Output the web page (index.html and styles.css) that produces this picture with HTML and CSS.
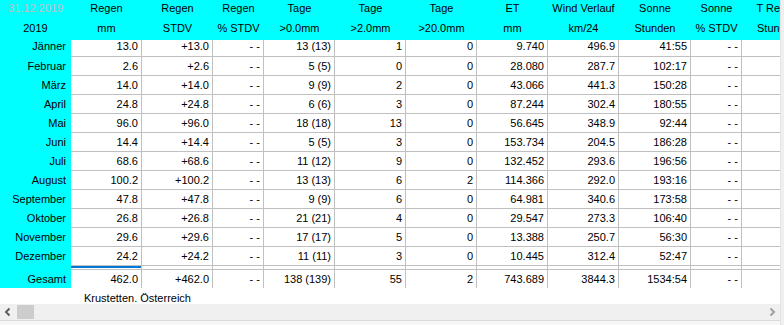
FILE: index.html
```html
<!DOCTYPE html>
<html>
<head>
<meta charset="utf-8">
<link rel="stylesheet" href="styles.css">
</head>
<body>
<div class="window">
  <div class="main">
    <div class="grid">
      <div class="row head h1">
        <div class="hc date">31.12.2019</div>
        <div class="hc">Regen</div><div class="hc">Regen</div><div class="hc">Regen</div><div class="hc">Tage</div><div class="hc">Tage</div><div class="hc">Tage</div><div class="hc">ET</div><div class="hc">Wind Verlauf</div><div class="hc">Sonne</div><div class="hc">Sonne</div><div class="hc">T Regen</div>
      </div>
      <div class="row head h2">
        <div class="hc">2019</div>
        <div class="hc">mm</div><div class="hc">STDV</div><div class="hc">% STDV</div><div class="hc">&gt;0.0mm</div><div class="hc">&gt;2.0mm</div><div class="hc">&gt;20.0mm</div><div class="hc">mm</div><div class="hc">km/24</div><div class="hc">Stunden</div><div class="hc">% STDV</div><div class="hc">Stunden</div>
      </div>
      <div class="row first">
        <div class="lab">Jänner</div><div class="c">13.0</div><div class="c">+13.0</div><div class="c">- -</div><div class="c">13 (13)</div><div class="c">1</div><div class="c">0</div><div class="c">9.740</div><div class="c">496.9</div><div class="c">41:55</div><div class="c">- -</div><div class="c"></div>
      </div>
      <div class="row">
        <div class="lab">Februar</div><div class="c">2.6</div><div class="c">+2.6</div><div class="c">- -</div><div class="c">5 (5)</div><div class="c">0</div><div class="c">0</div><div class="c">28.080</div><div class="c">287.7</div><div class="c">102:17</div><div class="c">- -</div><div class="c"></div>
      </div>
      <div class="row">
        <div class="lab">März</div><div class="c">14.0</div><div class="c">+14.0</div><div class="c">- -</div><div class="c">9 (9)</div><div class="c">2</div><div class="c">0</div><div class="c">43.066</div><div class="c">441.3</div><div class="c">150:28</div><div class="c">- -</div><div class="c"></div>
      </div>
      <div class="row">
        <div class="lab">April</div><div class="c">24.8</div><div class="c">+24.8</div><div class="c">- -</div><div class="c">6 (6)</div><div class="c">3</div><div class="c">0</div><div class="c">87.244</div><div class="c">302.4</div><div class="c">180:55</div><div class="c">- -</div><div class="c"></div>
      </div>
      <div class="row">
        <div class="lab">Mai</div><div class="c">96.0</div><div class="c">+96.0</div><div class="c">- -</div><div class="c">18 (18)</div><div class="c">13</div><div class="c">0</div><div class="c">56.645</div><div class="c">348.9</div><div class="c">92:44</div><div class="c">- -</div><div class="c"></div>
      </div>
      <div class="row">
        <div class="lab">Juni</div><div class="c">14.4</div><div class="c">+14.4</div><div class="c">- -</div><div class="c">5 (5)</div><div class="c">3</div><div class="c">0</div><div class="c">153.734</div><div class="c">204.5</div><div class="c">186:28</div><div class="c">- -</div><div class="c"></div>
      </div>
      <div class="row">
        <div class="lab">Juli</div><div class="c">68.6</div><div class="c">+68.6</div><div class="c">- -</div><div class="c">11 (12)</div><div class="c">9</div><div class="c">0</div><div class="c">132.452</div><div class="c">293.6</div><div class="c">196:56</div><div class="c">- -</div><div class="c"></div>
      </div>
      <div class="row">
        <div class="lab">August</div><div class="c">100.2</div><div class="c">+100.2</div><div class="c">- -</div><div class="c">13 (13)</div><div class="c">6</div><div class="c">2</div><div class="c">114.366</div><div class="c">292.0</div><div class="c">193:16</div><div class="c">- -</div><div class="c"></div>
      </div>
      <div class="row">
        <div class="lab">September</div><div class="c">47.8</div><div class="c">+47.8</div><div class="c">- -</div><div class="c">9 (9)</div><div class="c">6</div><div class="c">0</div><div class="c">64.981</div><div class="c">340.6</div><div class="c">173:58</div><div class="c">- -</div><div class="c"></div>
      </div>
      <div class="row">
        <div class="lab">Oktober</div><div class="c">26.8</div><div class="c">+26.8</div><div class="c">- -</div><div class="c">21 (21)</div><div class="c">4</div><div class="c">0</div><div class="c">29.547</div><div class="c">273.3</div><div class="c">106:40</div><div class="c">- -</div><div class="c"></div>
      </div>
      <div class="row">
        <div class="lab">November</div><div class="c">29.6</div><div class="c">+29.6</div><div class="c">- -</div><div class="c">17 (17)</div><div class="c">5</div><div class="c">0</div><div class="c">13.388</div><div class="c">250.7</div><div class="c">56:30</div><div class="c">- -</div><div class="c"></div>
      </div>
      <div class="row">
        <div class="lab">Dezember</div><div class="c">24.2</div><div class="c">+24.2</div><div class="c">- -</div><div class="c">11 (11)</div><div class="c">3</div><div class="c">0</div><div class="c">10.445</div><div class="c">312.4</div><div class="c">52:47</div><div class="c">- -</div><div class="c"></div>
      </div>
      <div class="row sep">
        <div class="lab"></div><div class="c focus"></div><div class="c"></div><div class="c"></div><div class="c"></div><div class="c"></div><div class="c"></div><div class="c"></div><div class="c"></div><div class="c"></div><div class="c"></div><div class="c"></div>
      </div>
      <div class="row">
        <div class="lab">Gesamt</div><div class="c">462.0</div><div class="c">+462.0</div><div class="c">- -</div><div class="c">138 (139)</div><div class="c">55</div><div class="c">2</div><div class="c">743.689</div><div class="c">3844.3</div><div class="c">1534:54</div><div class="c">- -</div><div class="c"></div>
      </div>
    </div>
    <div class="footer">Krustetten. Österreich</div>
    <div class="hscroll">
      <svg class="arrow" width="16" height="16" viewBox="0 0 16 16"><path d="M9.5 4.5 L6 8 L9.5 11.5" fill="none" stroke="#606060" stroke-width="2"/></svg>
      <div class="thumb"></div>
      <div class="track"></div>
      <svg class="arrow" width="16" height="16" viewBox="0 0 16 16"><path d="M6.5 4.5 L10 8 L6.5 11.5" fill="none" stroke="#a0a0a0" stroke-width="2"/></svg>
    </div>
    <div class="bottom"></div>
  </div>
  <div class="vstrip"></div>
</div>
</body>
</html>
```
FILE: styles.css
```css
html, body {
  margin: 0;
  padding: 0;
  background: #ffffff;
}
body {
  font-family: "Liberation Sans", Arial, sans-serif;
  font-size: 11px;
  color: #000;
  width: 784px;
  height: 325px;
  overflow: hidden;
}
.window {
  display: flex;
  width: 784px;
  height: 325px;
}
.main {
  width: 780px;
  display: flex;
  flex-direction: column;
  overflow: hidden;
}
.vstrip {
  width: 3px;
  background: #f0f0f0;
  border-left: 1px solid #e3e3e3;
}
.grid {
  display: flex;
  flex-direction: column;
  width: 780px;
  overflow: hidden;
}
.row {
  display: grid;
  grid-template-columns: 71px 71px 71px 51px 71px 71px 71px 71px 71px 72px 51px 71px;
  width: 812px;
  height: 19px;
  flex: none;
  background-color: #00ffff;
}
.hc {
  text-align: center;
  white-space: nowrap;
  overflow: hidden;
}
.h1 {
  height: 19px;
  line-height: 17px;
}
.h2 {
  height: 21px;
  line-height: 18px;
}
.date {
  color: #c0c0c0;
}
.lab {
  text-align: right;
  padding-right: 5px;
  line-height: 18px;
  white-space: nowrap;
  overflow: hidden;
}
.c {
  background-color: #ffffff;
  border-right: 1px solid #c0c0c0;
  border-bottom: 1px solid #c0c0c0;
  text-align: right;
  padding-right: 3px;
  line-height: 18px;
  white-space: nowrap;
  overflow: hidden;
}
.first {
  height: 17px;
}
.first .c,
.first .lab {
  line-height: 12px;
}
.sep {
  height: 4px;
}
.focus {
  box-shadow: inset 0 2px 0 #0078d7;
}
.footer {
  height: 16px;
  flex: none;
  line-height: 20px;
  padding-left: 84px;
  overflow: hidden;
  white-space: nowrap;
}
.hscroll {
  height: 16px;
  flex: none;
  background: #f0f0f0;
  display: flex;
  align-items: center;
}
.arrow {
  flex: 0 0 16px;
}
.thumb {
  width: 17px;
  height: 14px;
  margin-left: 1px;
  background: #cdcdcd;
}
.track {
  flex: 1;
}
.bottom {
  height: 4px;
  flex: none;
  border-top: 1px solid #dadada;
  background: #f7f7f7;
}
```
